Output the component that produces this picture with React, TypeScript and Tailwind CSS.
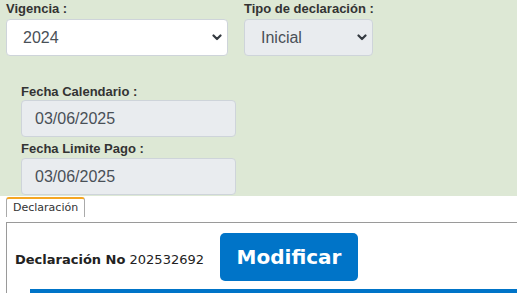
import { FC } from 'react';

type SelectProps = {
  value: string;
  disabled?: boolean;
  className?: string;
};

const Chevron = () => (
  <svg width="10" height="7" viewBox="0 0 10 7" fill="none" className="shrink-0">
    <path d="M1.5 1.5L5 5L8.5 1.5" stroke="#343a40" strokeWidth="2.2" strokeLinecap="round" strokeLinejoin="round" />
  </svg>
);

const FakeSelect: FC<SelectProps> = ({ value, disabled, className }) => (
  <div
    className={`flex h-[37px] items-center justify-between rounded-[4px] border border-[#ced4da] pl-[16px] pr-[5px] text-[16px] text-[#495057] ${
      disabled ? 'bg-[#e9ecef]' : 'bg-white'
    } ${className ?? ''}`}
  >
    <span>{value}</span>
    <Chevron />
  </div>
);

const DateField = ({ value }: { value: string }) => (
  <div className="flex h-[37px] items-center rounded-[4px] border border-[#ced4da] bg-[#e9ecef] pl-[13px] text-[16px] text-[#495057]">
    {value}
  </div>
);

const App = () => {
  return (
    <div className="h-[293px] w-[517px] overflow-hidden bg-white font-['Liberation_Sans',Arial,sans-serif]">
      {/* filtros */}
      <div className="h-[196px] bg-[#dde8d5]">
        <div className="flex gap-[16px] pl-[6px]">
          <div className="w-[222px]">
            <label className="block whitespace-nowrap text-[13px] font-bold leading-[18px] text-[#333]">Vigencia :</label>
            <FakeSelect value="2024" className="mt-[1px]" />
          </div>
          <div className="w-[129px]">
            <label className="block whitespace-nowrap text-[13px] font-bold leading-[18px] text-[#333]">
              Tipo de declaración :
            </label>
            <FakeSelect value="Inicial" disabled className="mt-[1px]" />
          </div>
        </div>

        <div className="w-[236px] pl-[21px] pt-[27px]">
          <label className="block text-[13px] font-bold leading-[17px] text-[#333]">Fecha Calendario :</label>
          <DateField value="03/06/2025" />
          <label className="mt-[3px] block text-[13px] font-bold leading-[18px] text-[#333]">Fecha Limite Pago :</label>
          <DateField value="03/06/2025" />
        </div>
      </div>

      {/* tabs */}
      <div className="flex pl-[6px] pt-[1px] font-['DejaVu_Sans',Verdana,sans-serif]">
        <div className="h-[20px] rounded-t-[3px] border-x border-t-2 border-x-[#aaa] border-t-[#f5a623] px-[6px] text-[11px] leading-[18px] text-[#333]">
          Declaración
        </div>
      </div>

      <div className="ml-[6px] mt-[5px] border-l border-t border-[#9a9a9a] font-['DejaVu_Sans',Verdana,sans-serif]">
        <div className="flex items-baseline pl-[8px] pt-[10px]">
          <span className="text-[13px] text-[#222]">
            <b>Declaración No</b> 202532692
          </span>
          <button className="ml-[16px] h-[48px] w-[138px] rounded-[5px] bg-[#0074c8] text-[20px] font-bold text-white">
            Modificar
          </button>
        </div>
        <div className="ml-[23px] mt-[8px] h-[10px] bg-[#0074c8]" />
      </div>
    </div>
  );
};

export default App;
